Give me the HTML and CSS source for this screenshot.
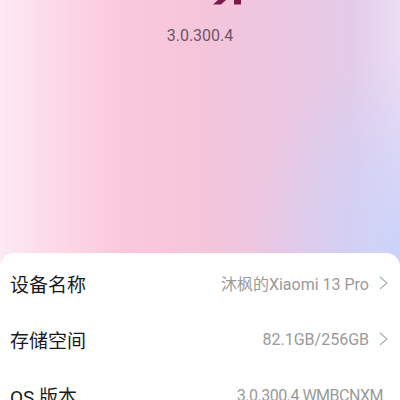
FILE: index.html
```html
<!DOCTYPE html>
<html lang="zh-CN">
<head>
    <meta charset="UTF-8">
    <title>我的设备</title>
<link rel="stylesheet" href="styles.css">
</head>
<body>
<div class="page">
    <div class="hero">
        <svg class="logo" width="100" height="6" viewBox="0 0 100 6">
            <!-- 被裁掉的 logo 底部 -->
            <polygon points="68,0 76,0 71,4.5 63,4.5" fill="#7a1a4a"/>
            <rect x="84" y="0" width="7" height="4.5" fill="#7a1a4a"/>
        </svg>
        <div class="version">3.0.300.4</div>
    </div>
    <ul class="card">
        <li class="row">
            <span class="label">设备名称</span>
            <span class="value">沐枫的Xiaomi 13 Pro
                <svg class="arrow" width="9" height="14" viewBox="0 0 9 14"><polyline points="1,1 8,7 1,13" fill="none" stroke="#b0b0b0" stroke-width="1.3"/></svg>
            </span>
        </li>
        <li class="row">
            <span class="label">存储空间</span>
            <span class="value">82.1GB/256GB
                <svg class="arrow" width="9" height="14" viewBox="0 0 9 14"><polyline points="1,1 8,7 1,13" fill="none" stroke="#b0b0b0" stroke-width="1.3"/></svg>
            </span>
        </li>
        <li class="row last">
            <span class="label">OS 版本</span>
            <span class="value">3.0.300.4 WMBCNXM</span>
        </li>
    </ul>
</div>
</body>
</html>
```
FILE: styles.css
```css
html, body {
    margin: 0;
    padding: 0;
}

body {
    font-family: Roboto, "Noto Sans CJK SC", sans-serif;
}

.page {
    width: 400px;
    height: 400px;
    overflow: hidden;
    background:
        radial-gradient(ellipse 160px 200px at 410px 250px, rgba(200, 210, 250, 0.95), rgba(200, 210, 250, 0) 100%),
        linear-gradient(90deg, #fdeaf3 0%, #fcd8e6 15%, #fbc9dc 30%, #f5c5da 50%, #ecc7e2 70%, #e3cce9 88%, #ecdcf4 100%);
}

.hero {
    height: 253px;
    display: flex;
    flex-direction: column;
    align-items: center;
}

.logo {
    display: block;
}

.version {
    margin-top: 20px;
    font-size: 16px;
    color: #6e5565;
}

.card {
    list-style: none;
    margin: 0;
    padding: 2px 0 0;
    background: #fff;
    border-radius: 14px 14px 0 0;
}

.row {
    height: 56px;
    display: flex;
    align-items: center;
    justify-content: space-between;
    padding: 0 12px 0 10px;
}

.row.last {
    padding-right: 17px;
}

.row.last .value {
    letter-spacing: -0.5px;
}

.label {
    font-size: 19px;
    color: #1a1a1a;
}

.value {
    display: flex;
    align-items: center;
    font-size: 16px;
    color: #9a9a9a;
}

.arrow {
    display: block;
    margin-left: 10px;
}
```
